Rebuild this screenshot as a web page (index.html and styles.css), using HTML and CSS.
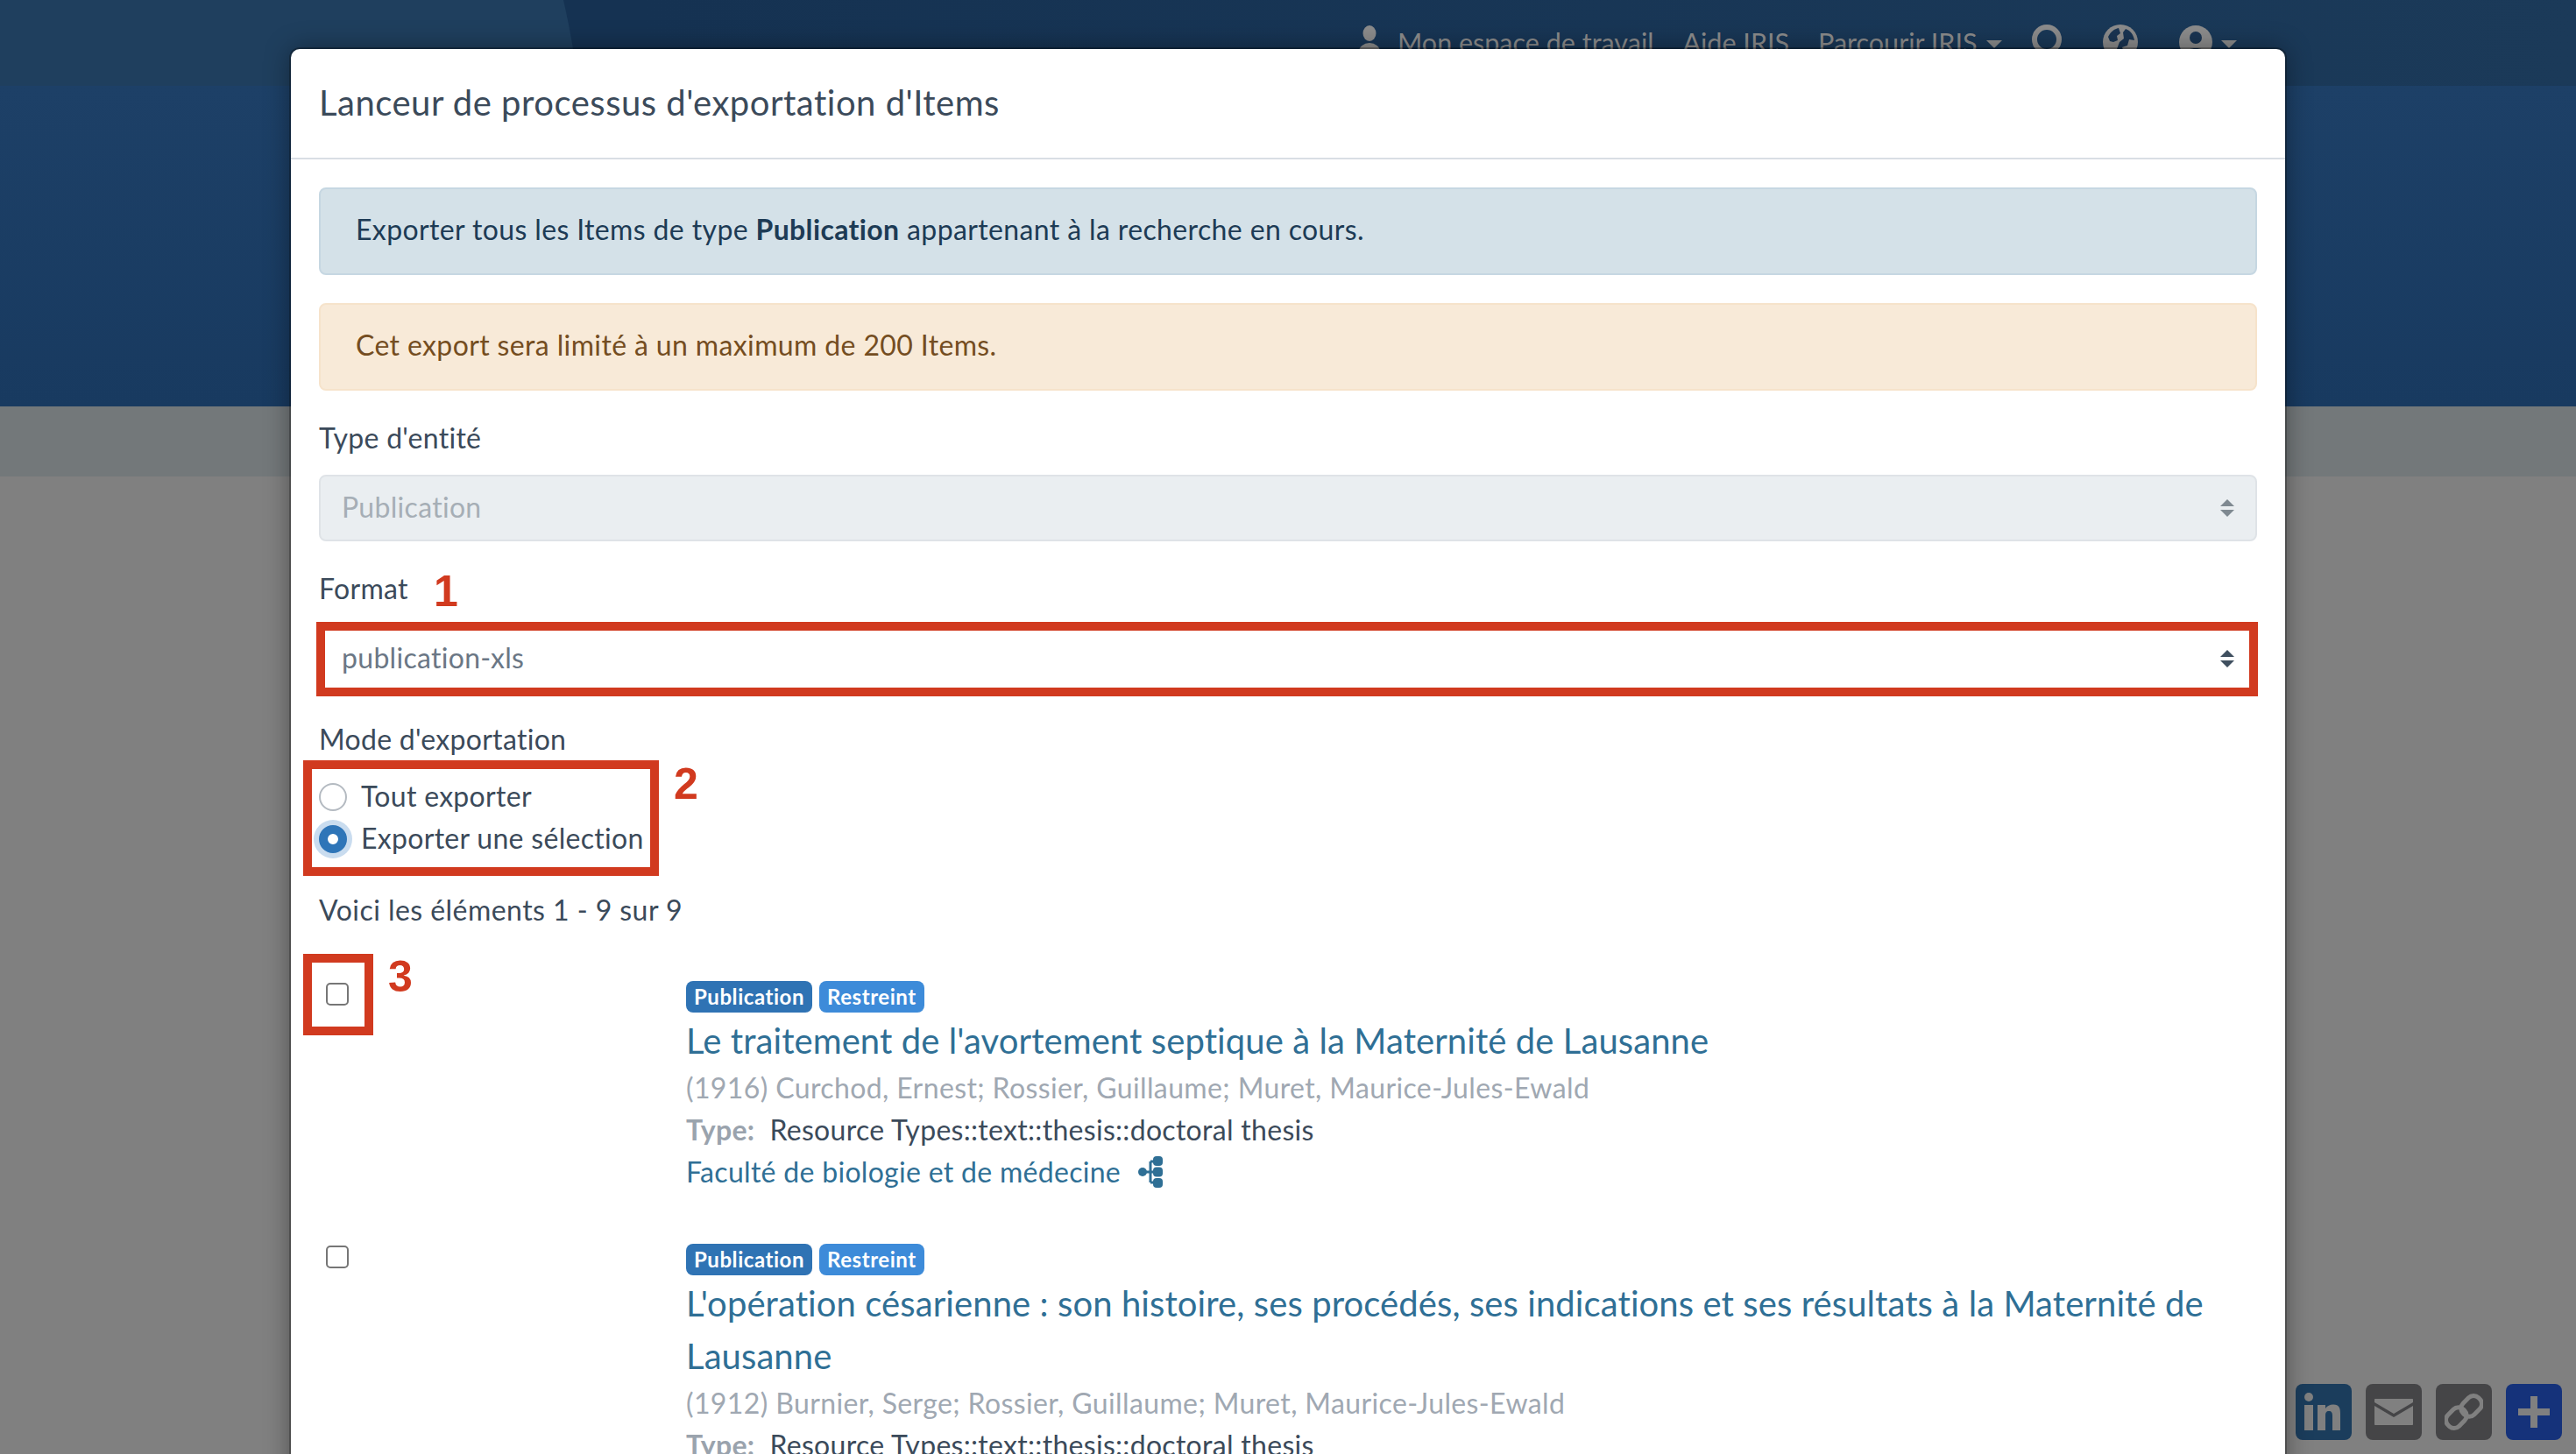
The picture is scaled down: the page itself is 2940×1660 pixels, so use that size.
FILE: index.html
```html
<!DOCTYPE html>
<html lang="fr">
<head>
<meta charset="utf-8">
<title>Lanceur de processus d'exportation d'Items</title>
<link rel="stylesheet" href="styles.css">
</head>
<body>
<div class="page">
  <header class="topbar">
    <svg class="topbar-shape" width="660" height="98" viewBox="0 0 660 98"><path d="M0 0H643C650 30 656 64 660 98H0Z" fill="#1f3f5e"/></svg>
    <nav class="topnav">
      <span class="nav-link first">
        <svg class="nav-person" width="24" height="40" viewBox="0 0 24 40"><ellipse cx="12" cy="9" rx="7.5" ry="9" fill="#8c8c8c"/><ellipse cx="12" cy="30" rx="12" ry="10" fill="#8c8c8c"/></svg>
        <span>Mon espace de travail</span>
      </span>
      <span class="nav-link">Aide IRIS</span>
      <span class="nav-link">Parcourir IRIS<i class="caret"></i></span>
      <svg class="nav-search" width="36" height="40" viewBox="0 0 36 40"><circle cx="18" cy="18" r="14" fill="none" stroke="#8c8c8c" stroke-width="6"/></svg>
      <svg class="nav-globe" width="40" height="40" viewBox="0 0 40 40"><circle cx="20" cy="20" r="20" fill="#8c8c8c"/><path d="M6 14C9 8 13 5 18 4L20 10 16 13 17 18 12 20 8 19ZM26 5C32 7 35 12 36 18L30 17 28 24 22 26 25 34 20 37 16 28 19 20 24 16 23 9Z" fill="#1a3553"/></svg>
      <span class="nav-user">
        <svg width="38" height="40" viewBox="0 0 38 40"><circle cx="19" cy="20" r="19" fill="#8c8c8c"/><circle cx="19" cy="15" r="7" fill="#1a3553"/><path d="M7 33C9 25 29 25 31 33Z" fill="#1a3553"/></svg>
        <i class="caret"></i>
      </span>
    </nav>
  </header>
  <div class="banner"></div>
  <div class="crumbs"></div>
  <div class="content"></div>

  <aside class="share">
    <span class="share-btn linkedin"><svg width="44" height="44" viewBox="0 0 44 44"><circle cx="5" cy="5" r="5" fill="#808080"/><rect x="0" y="14" width="10" height="29" fill="#808080"/><path d="M15 14H24V18C26 15 29 13.500 33 13.500 40 13.500 41 18 41 24V43H32V26C32 23 31 21 28 21 25 21 24 23 24 26V43H15Z" fill="#808080"/></svg></span>
    <span class="share-btn dark"><svg width="44" height="30" viewBox="0 0 44 30"><path d="M1 0H43C43.600 0 44 .4 44 1V4L22 17 0 4V1C0 .4 .4 0 1 0Z" fill="#808080"/><path d="M0 8L22 21 44 8V29C44 29.600 43.600 30 43 30H1C.4 30 0 29.600 0 29Z" fill="#808080"/></svg></span>
    <span class="share-btn dark"><svg width="44" height="44" viewBox="0 0 44 44"><g fill="none" stroke="#808080" stroke-width="5"><rect x="22" y="3" width="18" height="25" rx="8" transform="rotate(45 31 15)"/><rect x="4" y="16" width="18" height="25" rx="8" transform="rotate(45 13 29)"/></g></svg></span>
    <span class="share-btn plus"><svg width="36" height="36" viewBox="0 0 36 36"><path d="M14 0H22V14H36V22H22V36H14V22H0V14H14Z" fill="#808080"/></svg></span>
  </aside>

  <section class="modal">
    <div class="modal-header"><h4 class="modal-title">Lanceur de processus d'exportation d'Items</h4></div>
    <div class="modal-body">
      <div class="alert alert-info">Exporter tous les Items de type <b>Publication</b> appartenant à la recherche en cours.</div>
      <div class="alert alert-warning">Cet export sera limité à un maximum de 200 Items.</div>

      <div class="field">
        <div class="label">Type d'entité</div>
        <div class="select disabled"><span>Publication</span>
          <svg width="16" height="20" viewBox="0 0 16 20"><path d="M8 0L16 8H0ZM0 12H16L8 20Z" fill="#7f8991"/></svg>
        </div>
      </div>
      <div class="field">
        <div class="label">Format</div>
        <div class="select"><span>publication-xls</span>
          <svg width="16" height="20" viewBox="0 0 16 20"><path d="M8 0L16 8H0ZM0 12H16L8 20Z" fill="#3f4f5f"/></svg>
        </div>
      </div>
      <div class="field tight">
        <div class="label">Mode d'exportation</div>
        <label class="radio-row"><input class="radio" type="radio" name="mode"><span>Tout exporter</span></label>
        <label class="radio-row"><input class="radio" type="radio" name="mode" checked><span>Exporter une sélection</span></label>
      </div>
      <p class="count">Voici les éléments 1 - 9 sur 9</p>

      <article class="item">
        <input class="check" type="checkbox">
        <div class="item-main">
          <div class="badges"><span class="badge pub">Publication</span><span class="badge res">Restreint</span></div>
          <a class="item-title">Le traitement de l'avortement septique à la Maternité de Lausanne</a>
          <div class="muted">(1916) Curchod, Ernest; Rossier, Guillaume; Muret, Maurice-Jules-Ewald</div>
          <div class="type-row"><b>Type:</b><span>Resource Types::text::thesis::doctoral thesis</span></div>
          <div class="org"><a>Faculté de biologie et de médecine</a>
            <svg width="28" height="36" viewBox="0 0 28 36"><path d="M5 18H14M14 6H23M14 30H23M14 6V30M14 18H23" stroke="#2f6f95" stroke-width="3" fill="none"/><circle cx="5" cy="18" r="5" fill="#2f6f95"/><rect x="17" y="0" width="11" height="11" rx="4" fill="#2f6f95"/><rect x="17" y="12.500" width="11" height="11" rx="4" fill="#2f6f95"/><rect x="17" y="25" width="11" height="11" rx="4" fill="#2f6f95"/></svg>
          </div>
        </div>
      </article>
      <article class="item">
        <input class="check" type="checkbox">
        <div class="item-main">
          <div class="badges"><span class="badge pub">Publication</span><span class="badge res">Restreint</span></div>
          <a class="item-title">L'opération césarienne : son histoire, ses procédés, ses indications et ses résultats à la Maternité de Lausanne</a>
          <div class="muted">(1912) Burnier, Serge; Rossier, Guillaume; Muret, Maurice-Jules-Ewald</div>
          <div class="type-row"><b>Type:</b><span>Resource Types::text::thesis::doctoral thesis</span></div>
        </div>
      </article>
    </div>

    <div class="mark box-format"></div>
    <div class="mark box-mode"></div>
    <div class="mark box-check"></div>
    <span class="num num-1">1</span>
    <span class="num num-2">2</span>
    <span class="num num-3">3</span>
  </section>
</div>
</body>
</html>
```
FILE: styles.css
```css
* { box-sizing: border-box; }
html, body { margin: 0; padding: 0; height: 100%; overflow: hidden; }
body { font-family: "Lato", "Noto Sans", sans-serif; font-size: 32px; line-height: 48px; letter-spacing: .3px; font-variant-ligatures: none; color: #3b4a5a; background: #808080; }
.page { position: relative; width: 2940px; height: 1660px; overflow: hidden; display: flex; flex-direction: column; }

.topbar { position: relative; height: 98px; background: linear-gradient(90deg, #153252 25%, #1b3a59); flex: none; }
.topbar-shape { position: absolute; left: 0; top: 0; }
.topnav { position: relative; display: flex; align-items: center; height: 96px; padding-left: 1551px; color: #8c8c8c; font-size: 30.5px; letter-spacing: 0; }
.nav-link { display: flex; align-items: center; margin-right: 33px; white-space: nowrap; }
.nav-link.first { gap: 20px; }
.nav-person { margin-top: 2px; }
.caret { display: inline-block; width: 0; height: 0; margin-left: 10px; margin-top: 4px; border-left: 9px solid transparent; border-right: 9px solid transparent; border-top: 9px solid #8c8c8c; }
.nav-search { margin-left: 0; margin-top: -2px; }
.nav-globe { margin-left: 46px; }
.nav-user { display: flex; align-items: center; margin-left: 47px; }

.banner { height: 366px; flex: none; background: linear-gradient(180deg, #1d4067, #183a60); }
.crumbs { height: 80px; flex: none; background: #73787a; }
.content { flex: 1; background: #808080; }

.share { position: absolute; left: 2620px; top: 1580px; display: flex; gap: 16px; }
.share-btn { width: 64px; height: 64px; border-radius: 8px; display: flex; align-items: center; justify-content: center; }
.linkedin { background: #1b3d5c; }
.dark { background: #454547; }
.plus { background: #15327a; }

.modal { position: absolute; left: 332px; top: 56px; width: 2276px; height: 1640px; background: #fff; border-radius: 10px 10px 0 0; box-shadow: 0 0 0 2px rgba(0,0,0,.25), 0 0 30px rgba(0,0,0,.4); }
.modal-header { padding: 31px 32px 33px; border-bottom: 2px solid #d9dee4; }
.modal-title { margin: 0; font-size: 40px; line-height: 60px; font-weight: 400; letter-spacing: .5px; color: #3b4a5a; }
.modal-body { padding: 32px; }

.alert { height: 100px; padding: 22px 40px 26px; border: 2px solid; border-radius: 8px; margin-bottom: 32px; letter-spacing: .37px; }
.alert b { font-weight: 700; }
.alert-info { background: #d4e1e8; border-color: #c6d7e2; color: #1d3b55; }
.alert-warning { background: #f8ead8; border-color: #f6e3cb; color: #744d21; }

.field { margin-bottom: 32px; }
.field.tight { margin-bottom: 33px; }
.label { margin: -2px 0 18px; }
.select { height: 76px; padding: 0 24px; border: 2px solid #fff; border-radius: 8px; display: flex; align-items: center; justify-content: space-between; color: #6b7785; }
.select span { padding-bottom: 3px; }
.select.disabled { background: #eaeef1; border-color: #dfe3e7; color: #a6aeb6; }

.radio-row { display: flex; align-items: center; height: 48px; gap: 16px; }
.radio-row span { padding-bottom: 3px; }
.radio { appearance: none; width: 32px; height: 32px; margin: 0; border-radius: 50%; border: 2px solid #b4bac1; background: #fff; flex: none; }
.radio:checked { border: 10px solid #2e75b8; box-shadow: 0 0 0 6px #c9dcef; }

.count { margin: 0 0 57px; letter-spacing: .45px; }

.item { display: grid; grid-template-columns: 419px 1fr; margin-bottom: 58px; }
.check { appearance: none; width: 26px; height: 26px; margin: 2px 0 0 8px; border: 2px solid #767676; border-radius: 5px; background: #fff; }
.badges { display: flex; gap: 8px; height: 38px; }
.badge { height: 36px; padding: 0 9px; border-radius: 8px; color: #fff; font-size: 24px; line-height: 36px; font-weight: 700; letter-spacing: .55px; }
.pub { background: #2f73b4; }
.res { background: #3d8bd9; }
.item-title { display: block; font-size: 40px; line-height: 60px; letter-spacing: .09px; color: #2f6f95; }
.muted { color: #a0a8b2; letter-spacing: .38px; }
.type-row { display: flex; gap: 17px; }
.type-row b { color: #9aa3ad; font-weight: 700; }
.org { display: flex; align-items: center; gap: 20px; color: #2f6f95; }

.mark { position: absolute; border: 10px solid #d13a1f; }
.box-format { left: 29px; top: 654px; width: 2216px; height: 85px; }
.box-mode { left: 14px; top: 812px; width: 406px; height: 132px; }
.box-check { left: 14px; top: 1033px; width: 80px; height: 93px; }
.num { position: absolute; font-family: "Liberation Sans", Arial, sans-serif; font-weight: 700; font-size: 50px; line-height: 50px; letter-spacing: 0; color: #d13a1f; }
.num-1 { left: 163px; top: 594px; }
.num-2 { left: 437px; top: 814px; }
.num-3 { left: 111px; top: 1034px; }
```
